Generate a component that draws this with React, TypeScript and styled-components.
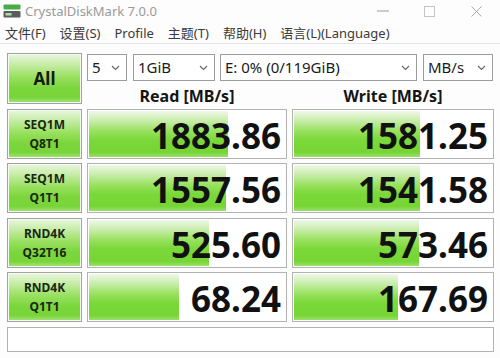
import React from "react";
import styled, { createGlobalStyle } from "styled-components";

const Global = createGlobalStyle`
  html, body { margin: 0; padding: 0; background: #ffffff; }
  body { font-family: "Noto Sans", "Noto Sans CJK SC", sans-serif; }
`;

const Window = styled.div`
  width: 500px;
  height: 358px;
  background: #fdfdfd;
  overflow: hidden;
  display: flex;
  flex-direction: column;
`;

const TitleBar = styled.div`
  height: 22px;
  display: flex;
  align-items: center;
  padding-left: 3px;
`;

const Title = styled.span`
  margin-left: 4px;
  font-size: 13px;
  color: #9a9a9a;
  line-height: 22px;
`;

const Controls = styled.div`
  margin-left: auto;
  display: flex;
  height: 22px;
`;

const ControlBtn = styled.div`
  width: 47px;
  height: 22px;
  display: flex;
  align-items: center;
  justify-content: center;
`;

const MenuBar = styled.div`
  height: 21px;
  display: flex;
  align-items: center;
  gap: 14px;
  padding-left: 5px;
  border-bottom: 1px solid #e4e4e4;
`;

const MenuItem = styled.span`
  font-size: 13px;
  color: #3a3a3a;
  line-height: 21px;
  padding-top: 1px;
`;

const Main = styled.div`
  display: grid;
  grid-template-columns: 75px 200px 202px;
  grid-template-rows: 52px 50px 51px 50px 51px 25px;
  column-gap: 5px;
  row-gap: 4px;
  padding: 9px 0 0 7px;
  align-items: start;
`;

const greenFace = `
  background: linear-gradient(
    to bottom,
    #eaf7e0 0%,
    #c6eca6 22%,
    #97e05e 48%,
    #7ad63a 70%,
    #78d438 88%,
    #a6e37c 100%
  );
`;

const AllButton = styled.div`
  height: 51px;
  box-sizing: border-box;
  border: 1px solid #a2a2a2;
  box-shadow: inset 0 0 0 1px #f4fbef;
  ${greenFace}
  display: flex;
  align-items: center;
  justify-content: center;
  font-size: 17px;
  font-weight: 700;
  color: #151a10;
`;

const TopPanel = styled.div`
  grid-column: 2 / 4;
  display: flex;
  flex-direction: column;
`;

const SelectRow = styled.div`
  display: flex;
  margin-top: 1px;
`;

const SelectBox = styled.div<{ $w: number; $gap: number }>`
  width: ${(p) => p.$w}px;
  margin-left: ${(p) => p.$gap}px;
  height: 27px;
  box-sizing: border-box;
  border: 1px solid #9c9c9c;
  background: #ffffff;
  display: flex;
  align-items: center;
  padding: 0 6px 0 4px;
  font-size: 15px;
  color: #1a1a1a;
`;

const SelectText = styled.span`
  flex: 1;
  white-space: nowrap;
  overflow: hidden;
  line-height: 25px;
`;

const HeaderRow = styled.div`
  display: grid;
  grid-template-columns: 200px 202px;
  column-gap: 5px;
  margin-top: 4px;
`;

const Header = styled.div`
  text-align: center;
  font-size: 16px;
  font-weight: 700;
  color: #151515;
  line-height: 22px;
`;

const LabelBox = styled.div`
  height: 50px;
  box-sizing: border-box;
  border: 1px solid #a2a2a2;
  box-shadow: inset 0 0 0 1px #f4fbef;
  ${greenFace}
  display: flex;
  flex-direction: column;
  align-items: center;
  justify-content: center;
  font-size: 12px;
  font-weight: 700;
  line-height: 19px;
  color: #1b2614;
`;

const ValueBox = styled.div<{ $fill: number }>`
  height: 50px;
  box-sizing: border-box;
  border: 1px solid #b2b2b2;
  box-shadow: inset 0 0 0 1px #ffffff;
  background-color: #ffffff;
  background-image: linear-gradient(
    to bottom,
    #f2f9ee 0%,
    #cdeeb2 20%,
    #98e15e 44%,
    #7bd83a 62%,
    #76d534 88%,
    #a2e274 100%
  );
  background-repeat: no-repeat;
  background-size: ${(p) => p.$fill}px 100%;
  display: flex;
  align-items: center;
  justify-content: flex-end;
  padding: 3px 5px 0 0;
  font-size: 35px;
  font-weight: 700;
  color: #111111;
  line-height: 1;
`;

const StatusBar = styled.div`
  grid-column: 1 / 4;
  height: 25px;
  box-sizing: border-box;
  border: 1px solid #b2b2b2;
  background: #ffffff;
`;

const Chevron = () => (
  <svg width="9" height="6" viewBox="0 0 9 6">
    <polyline points="1,1 4.5,4.5 8,1" fill="none" stroke="#666" strokeWidth="1.1" />
  </svg>
);

const AppIcon = () => (
  <svg width="18" height="14" viewBox="0 0 18 14">
    <rect x="0.5" y="0.5" width="17" height="5" rx="1" fill="#45ad48" />
    <rect x="0.5" y="7" width="17" height="6.5" rx="1" fill="#5c5c5c" />
    <rect x="2.5" y="9" width="6" height="2.5" fill="#a9dfa6" />
  </svg>
);

const rows = [
  { l1: "SEQ1M", l2: "Q8T1", read: "1883.86", rf: 140, write: "1581.25", wf: 127 },
  { l1: "SEQ1M", l2: "Q1T1", read: "1557.56", rf: 138, write: "1541.58", wf: 127 },
  { l1: "RND4K", l2: "Q32T16", read: "525.60", rf: 121, write: "573.46", wf: 126 },
  { l1: "RND4K", l2: "Q1T1", read: "68.24", rf: 91, write: "167.69", wf: 105 },
];

const menus = ["文件(F)", "设置(S)", "Profile", "主题(T)", "帮助(H)", "语言(L)(Language)"];

const selects = [
  { w: 40, gap: 0, t: "5" },
  { w: 82, gap: 6, t: "1GiB" },
  { w: 197, gap: 5, t: "E: 0% (0/119GiB)" },
  { w: 70, gap: 6, t: "MB/s" },
];

export default function App() {
  return (
    <Window>
      <Global />
      <TitleBar>
        <AppIcon />
        <Title>CrystalDiskMark 7.0.0</Title>
        <Controls>
          <ControlBtn>
            <svg width="12" height="2" viewBox="0 0 12 2">
              <line x1="0" y1="1" x2="12" y2="1" stroke="#9a9a9a" strokeWidth="1" />
            </svg>
          </ControlBtn>
          <ControlBtn>
            <svg width="11" height="11" viewBox="0 0 11 11">
              <rect x="0.5" y="0.5" width="10" height="10" fill="none" stroke="#c4c4c4" strokeWidth="1" />
            </svg>
          </ControlBtn>
          <ControlBtn>
            <svg width="11" height="11" viewBox="0 0 11 11">
              <path d="M0.5 0.5 L10.5 10.5 M10.5 0.5 L0.5 10.5" stroke="#a8a8a8" strokeWidth="1" />
            </svg>
          </ControlBtn>
        </Controls>
      </TitleBar>
      <MenuBar>
        {menus.map((m) => (
          <MenuItem key={m}>{m}</MenuItem>
        ))}
      </MenuBar>
      <Main>
        <AllButton>All</AllButton>
        <TopPanel>
          <SelectRow>
            {selects.map((s) => (
              <SelectBox key={s.t} $w={s.w} $gap={s.gap}>
                <SelectText>{s.t}</SelectText>
                <Chevron />
              </SelectBox>
            ))}
          </SelectRow>
          <HeaderRow>
            <Header>Read [MB/s]</Header>
            <Header>Write [MB/s]</Header>
          </HeaderRow>
        </TopPanel>
        {rows.map((r) => (
          <React.Fragment key={r.l1 + r.l2}>
            <LabelBox>
              <span>{r.l1}</span>
              <span>{r.l2}</span>
            </LabelBox>
            <ValueBox $fill={r.rf}>{r.read}</ValueBox>
            <ValueBox $fill={r.wf}>{r.write}</ValueBox>
          </React.Fragment>
        ))}
        <StatusBar />
      </Main>
    </Window>
  );
}
